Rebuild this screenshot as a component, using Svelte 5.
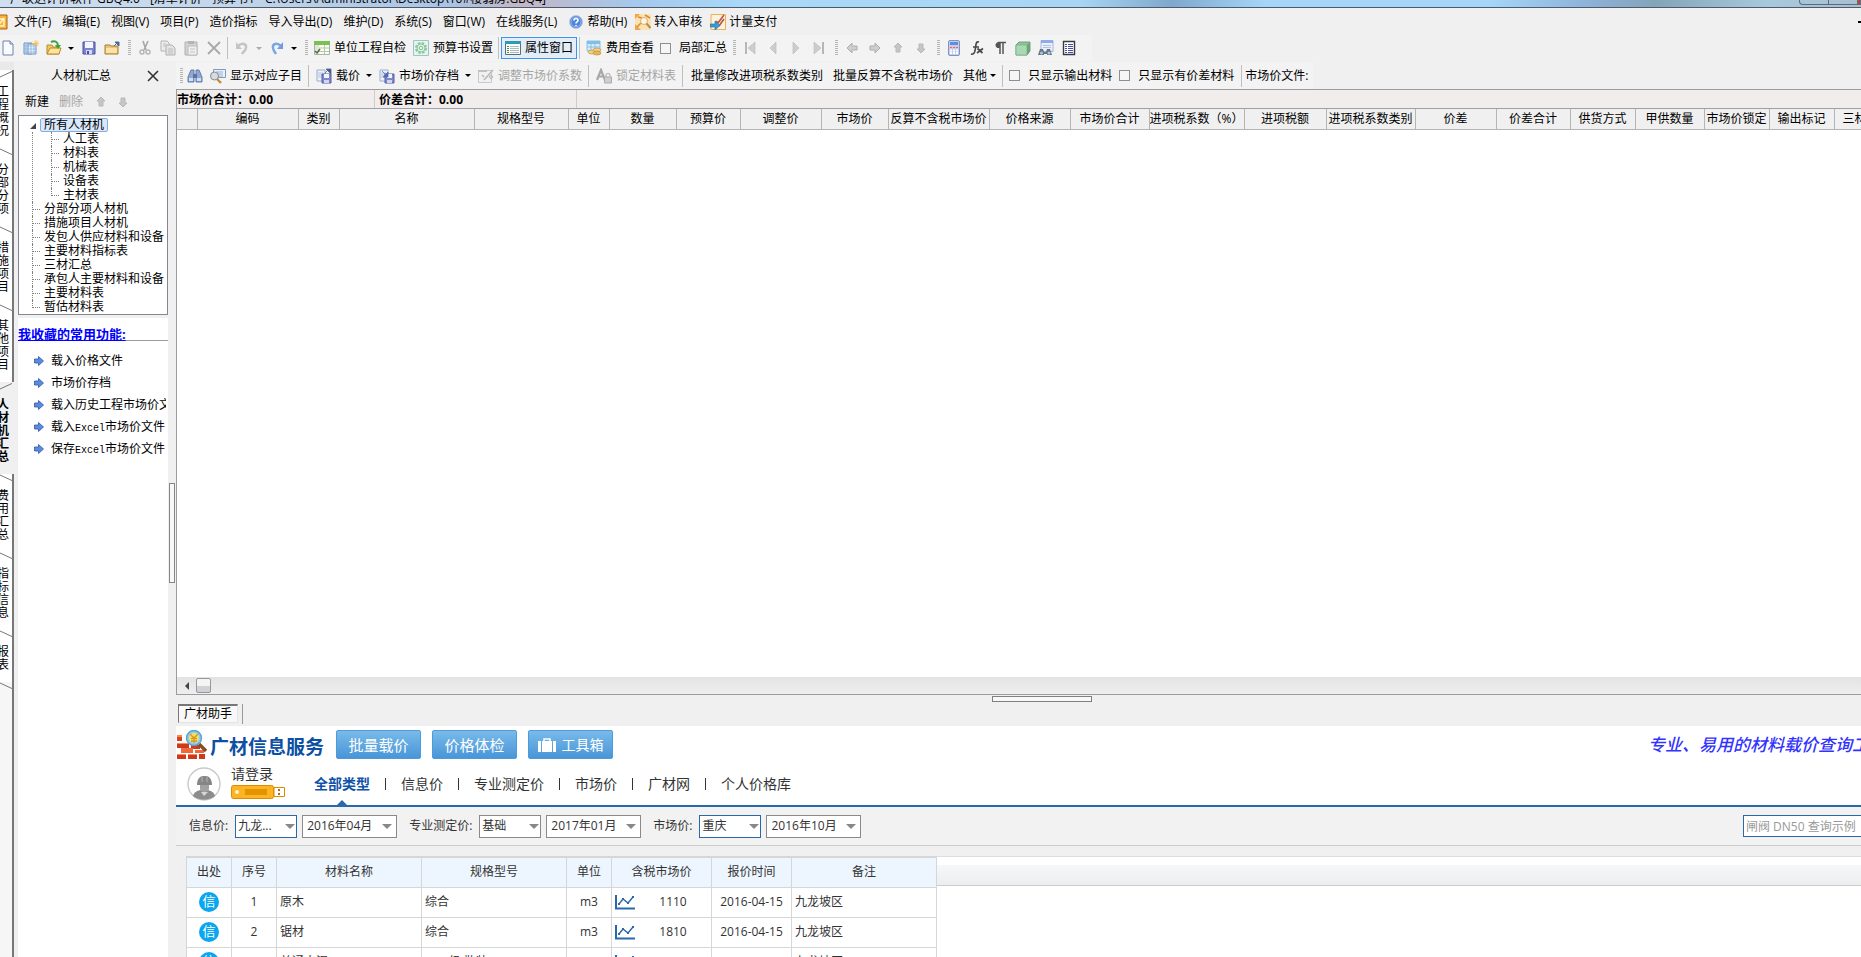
<script>
  const menus = [
    { t: '文件(F)' }, { t: '编辑(E)' }, { t: '视图(V)' }, { t: '项目(P)' }, { t: '造价指标' },
    { t: '导入导出(D)' }, { t: '维护(D)' }, { t: '系统(S)' }, { t: '窗口(W)' }, { t: '在线服务(L)' },
    { t: '帮助(H)', i: 'help' }, { t: '转入审核', i: 'audit' }, { t: '计量支付', i: 'pay' }
  ];

  const mainTools = [
    { i: 'new' }, { i: 'sheets' }, { i: 'open' }, { k: 'tri' }, { i: 'save' }, { i: 'folder' },
    { k: 'grip' }, { i: 'cut' }, { i: 'copy' }, { i: 'paste' }, { i: 'del' }, { k: 'sep' },
    { i: 'undo' }, { k: 'tri', off: true }, { i: 'redo' }, { k: 'tri' }, { k: 'grip' },
    { i: 'check', t: '单位工程自检' }, { i: 'gear', t: '预算书设置' }, { k: 'sep' },
    { i: 'props', t: '属性窗口', on: true }, { k: 'sep' }, { i: 'cost', t: '费用查看' },
    { k: 'box', t: '局部汇总' }, { k: 'grip' }, { i: 'first' }, { i: 'prev' }, { i: 'next' }, { i: 'last' },
    { k: 'grip' }, { i: 'aleft' }, { i: 'aright' }, { i: 'aup' }, { i: 'adown' }, { k: 'grip' },
    { i: 'calc' }, { i: 'fx' }, { i: 'para' }, { i: 'cube' }, { i: 'find' }, { i: 'list' }
  ];

  const subTools = [
    { k: 'grip' }, { i: 'bino' }, { i: 'lens', t: '显示对应子目' }, { k: 'sep' },
    { i: 'load', t: '载价' }, { k: 'tri' }, { i: 'store', t: '市场价存档' }, { k: 'tri' },
    { i: 'adjust', t: '调整市场价系数', off: true }, { k: 'sep' },
    { i: 'lock', t: '锁定材料表', off: true }, { k: 'sep' },
    { t: '批量修改进项税系数类别' }, { t: '批量反算不含税市场价' }, { t: '其他', tight: true }, { k: 'tri' }, { k: 'sep' },
    { k: 'box', t: '只显示输出材料' }, { k: 'box', t: '只显示有价差材料' }, { k: 'sep' }, { k: 'label', t: '市场价文件:' }
  ];

  const pages = ['工程概况', '分部分项', '措施项目', '其他项目', '人材机汇总', '费用汇总', '指标信息', '报表'];
  const active = '人材机汇总';

  const children = ['人工表', '材料表', '机械表', '设备表', '主材表'];
  const nodes = ['分部分项人材机', '措施项目人材机', '发包人供应材料和设备', '主要材料指标表', '三材汇总', '承包人主要材料和设备', '主要材料表', '暂估材料表'];

  const favourites = [['载入价格文件'], ['市场价存档'], ['载入历史工程市场价文件'], ['载入', 'Excel', '市场价文件'], ['保存', 'Excel', '市场价文件']];

  const cols = [
    ['', 20], ['编码', 101], ['类别', 41], ['名称', 135], ['规格型号', 94], ['单位', 41], ['数量', 67], ['预算价', 64],
    ['调整价', 81], ['市场价', 67], ['反算不含税市场价', 101], ['价格来源', 81], ['市场价合计', 79], ['进项税系数（%）', 95],
    ['进项税额', 82], ['进项税系数类别', 89], ['价差', 81], ['价差合计', 74], ['供货方式', 65], ['甲供数量', 69],
    ['市场价锁定', 65], ['输出标记', 65], ['三材类别', 65]
  ];

  const types = ['全部类型', '信息价', '专业测定价', '市场价', '广材网', '个人价格库'];
  const filters = [
    { id: 'info', label: '信息价:', area: '九龙...', month: '2016年04月', hot: true },
    { id: 'pro', label: '专业测定价:', area: '基础', month: '2017年01月', hot: false },
    { id: 'market', label: '市场价:', area: '重庆', month: '2016年10月', hot: true }
  ];
  const rows = [
    [1, '原木', '综合', 'm3', '1110', '2016-04-15', '九龙坡区'],
    [2, '锯材', '综合', 'm3', '1810', '2016-04-15', '九龙坡区'],
    [3, '普通水泥', '32.5级 散装', 't', '295', '2016-04-15', '九龙坡区']
  ];
</script>

{#snippet icon(name)}
  <svg class="ico" viewBox="0 0 16 16" width="16" height="16" aria-hidden="true">
    {#if name === 'help'}
      <circle cx="8" cy="8" r="6.5" fill="#4f86d9" stroke="#b9c9e4" /><circle cx="8" cy="8" r="5" fill="none" stroke="#8fb4ee" />
      <path d="M6 6.4c0-2.6 4-2.6 4 0 0 1.5-2 1.4-2 3M8 11v1.3" fill="none" stroke="#fff" stroke-width="1.6" />
    {:else if name === 'audit'}
      <path d="M0 0h16v16H0z" fill="#fbe3b0" /><path d="M0 10L6 16H0zM0 0h5L0 5z" fill="#f0a548" /><path d="M3 3l4 1M10 1l5 3M2 13l4-4" stroke="#d9883a" stroke-width="1.500" />
      <circle cx="9" cy="7" r="3.5" fill="#fff6e2" stroke="#dcae70" /><path d="M11.500 9.500l4 4.500" stroke="#b98a55" stroke-width="2" />
    {:else if name === 'pay'}
      <path d="M1 .5h14.500v15H1z" fill="#fdf3dd" stroke="#eab253" /><path d="M6 7l2 2 6-8M9 12l5-7" stroke="#b9584a" stroke-width="1.700" fill="none" />
      <path d="M0 10h5V7l5 4.500L5 16v-3H0z" fill="#3a9ad6" stroke="#1f6fa8" stroke-width=".6" />
    {:else if name === 'new'}
      <path d="M3 1h7l3 3v11H3z" fill="#f7fbff" stroke="#6d83a8" /><path d="M10 1v3h3" fill="#cfdcf0" stroke="#6d83a8" />
    {:else if name === 'sheets'}
      <path d="M1 3h8v11H1z" fill="#cfe3f7" stroke="#6a93c4" /><path d="M5 4h8v10H5z" fill="#e9f3fc" stroke="#6a93c4" />
      <path d="M1 6h12M1 9h12M1 12h12M8 4v10M11 4v10M3 3v11" stroke="#8fb2da" stroke-width=".8" />
      <path d="M13 0v7M9.500 3.500h7M10.500 1l5 5M15.500 1l-5 5" stroke="#f7c34b" stroke-width=".9" />
    {:else if name === 'open'}
      <path d="M1 5h5l1 2h6v7H1z" fill="#f3c95f" stroke="#b98a2a" /><path d="M1 14l3-6h11l-2 6z" fill="#fde49b" stroke="#b98a2a" />
      <path d="M5 2c4-2 7 0 7 4" fill="none" stroke="#3aa43a" stroke-width="2" /><path d="M9 5h6l-3 4z" fill="#3aa43a" />
    {:else if name === 'save'}
      <path d="M2 2h12v12H2z" fill="#7d83cf" stroke="#4b519c" /><path d="M4 2h8v6H4z" fill="#f4f6ff" /><path d="M5 10h6v4H5z" fill="#d9dcf5" /><path d="M6 11h2v3H6z" fill="#4b519c" />
    {:else if name === 'folder'}
      <path d="M1 5h5l1 1h7v8H1z" fill="#e9c47c" stroke="#a67c33" /><path d="M2 8h11v5H2z" fill="#fbe2a5" /><path d="M10 6l3-3M11 2h4v4z" fill="#4b6a9c" stroke="#4b6a9c" />
    {:else if name === 'cut'}
      <path d="M6 1l3 9M11 1L7 10" stroke="#a8a8a8" stroke-width="1.6" /><circle cx="5" cy="12" r="2" fill="none" stroke="#b4b4b4" stroke-width="1.4" /><circle cx="11" cy="12" r="2" fill="none" stroke="#b4b4b4" stroke-width="1.4" />
    {:else if name === 'copy'}
      <path d="M1 1h6l2 2v8H1z" fill="#ececec" stroke="#b4b4b4" /><path d="M6 5h6l3 3v7H6z" fill="#e4e4e4" stroke="#b0b0b0" /><path d="M8 9h5M8 11h5M8 13h5M3 4h3M3 6h2" stroke="#bdbdbd" />
    {:else if name === 'paste'}
      <path d="M2 2h12v13H2z" fill="#d2d2d2" stroke="#b0b0b0" /><path d="M5 1h6v3H5z" fill="#b4b4b4" /><path d="M5 6h9v9H5z" fill="#efefef" stroke="#bcbcbc" /><path d="M7 9h5M7 12h5" stroke="#c4c4c4" />
    {:else if name === 'del'}
      <path d="M2 2l12 12M14 2L2 14" stroke="#a9a9a9" stroke-width="1.8" />
    {:else if name === 'undo'}
      <path d="M4 6c4-4 9-2 8 2-.5 3-3 4-4 6" fill="none" stroke="#c4c4c4" stroke-width="2.400" /><path d="M2 2v7h6z" fill="#c4c4c4" />
    {:else if name === 'redo'}
      <path d="M12 6C8 2 3 4 4 8c.5 3 2 4 3 6" fill="none" stroke="#7ba6e6" stroke-width="2.400" /><path d="M14 2v7H8z" fill="#6f9be0" />
    {:else if name === 'check'}
      <path d="M.5 1.500h15v13H.5z" fill="#fbfdf9" stroke="#a8b3a0" /><path d="M0 1h16v4H0z" fill="#7cc04f" /><path d="M5 8h10M5 11.500h10M10.500 5v9" stroke="#b4c8a8" /><path d="M1 5h4v9H1z" fill="#dfe8d8" /><path d="M1 11l2 2 3-4" fill="none" stroke="#55654a" stroke-width="1.400" />
    {:else if name === 'gear'}
      <path d="M.5 .5h15v15H.5z" fill="#e6f4ee" stroke="#9cc4cf" /><circle cx="8" cy="8" r="5" fill="none" stroke="#8cc79a" stroke-width="2" stroke-dasharray="2.500 1.430" /><circle cx="8" cy="8" r="4" fill="none" stroke="#8cc79a" /><circle cx="8" cy="8" r="1.800" fill="none" stroke="#7dbd8d" />
    {:else if name === 'props'}
      <path d="M.5 1.500h15v13H.5z" fill="#f8fbfb" stroke="#5b6f74" /><path d="M0 1h16v3H0z" fill="#2d9ab4" /><path d="M2 6.500h2M2 8.500h2M2 10.500h2M2 12.500h2" stroke="#3d9a4e" /><path d="M5 6.500h9M5 8.500h9M5 10.500h9M5 12.500h9" stroke="#b0bcbc" />
    {:else if name === 'cost'}
      <path d="M1 1h13v10H1z" fill="#d6ecfa" stroke="#8dbfe2" /><path d="M1 1h13v3H1z" fill="#7fc0ea" /><path d="M1 7h13M5 4v7M9 4v7" stroke="#8dbfe2" /><ellipse cx="6" cy="12" rx="4" ry="2" fill="#f0cf8e" stroke="#b98a3a" stroke-width=".6" /><ellipse cx="11" cy="10" rx="4" ry="2" fill="#f0cf8e" stroke="#b98a3a" stroke-width=".6" /><ellipse cx="11" cy="13" rx="4" ry="2" fill="#e8b858" stroke="#b98a3a" stroke-width=".6" />
    {:else if name === 'first'}
      <path d="M4 2v12" stroke="#b6b6b6" stroke-width="2" /><path d="M13 2v12L6 8z" fill="#cdcdcd" stroke="#b9b9b9" stroke-width=".6" />
    {:else if name === 'prev'}
      <path d="M11 2v12L5 8z" fill="#cdcdcd" stroke="#b9b9b9" stroke-width=".6" />
    {:else if name === 'next'}
      <path d="M5 2v12l6-6z" fill="#cdcdcd" stroke="#b9b9b9" stroke-width=".6" />
    {:else if name === 'last'}
      <path d="M12 2v12" stroke="#b6b6b6" stroke-width="2" /><path d="M3 2v12l7-6z" fill="#cdcdcd" stroke="#b9b9b9" stroke-width=".6" />
    {:else if name === 'aleft'}
      <path d="M3 8l5-5v3h5v4H8v3z" fill="#cfcfcf" stroke="#adadad" />
    {:else if name === 'aright'}
      <path d="M13 8L8 3v3H3v4h5v3z" fill="#cfcfcf" stroke="#adadad" />
    {:else if name === 'aup'}
      <path d="M8 3l4 4H10v5H6V7H4z" fill="#c6c6c6" stroke="#b8b8b8" />
    {:else if name === 'adown'}
      <path d="M8 13l4-4H10V4H6v5H4z" fill="#c6c6c6" stroke="#b8b8b8" />
    {:else if name === 'calc'}
      <rect x="2.500" y=".5" width="11" height="15" rx="1.500" fill="#c3cfec" stroke="#7f92c0" /><path d="M4 2h8v3H4z" fill="#5c8fe0" /><path d="M4 7.500h8M4 10.500h8M4 13h8" stroke="#fff" stroke-width="2" stroke-dasharray="2 1" /><path d="M4 7.500h8" stroke="#d66" stroke-width="1.500" stroke-dasharray="2 1" />
    {:else if name === 'fx'}
      <path d="M10 2C7 1 7 4 6.500 8S5 15 2 14M4 7h6M8.500 8.500l5 4.500M14 8.500L8 13" fill="none" stroke="#4a4a4a" stroke-width="1.700" />
    {:else if name === 'para'}
      <path d="M8 2v12M11 2v12M6 2.500h8" stroke="#555" stroke-width="1.500" fill="none" /><path d="M8 2C2 1 2 9 8 8z" fill="#555" />
    {:else if name === 'cube'}
      <path d="M1 5l3-3h11v9l-3 4H1z" fill="#8fc79b" stroke="#5a8f68" stroke-width=".8" /><path d="M1 5h11v10H1z" fill="#a9d9b2" stroke="#6fa67c" stroke-width=".6" /><path d="M12 5l3-3v9l-3 4z" fill="#68a678" />
    {:else if name === 'find'}
      <path d="M3 .5h12v11H3z" fill="#eaf0fb" stroke="#a3b4dc" /><path d="M3 0h12v3H3z" fill="#8fabea" /><path d="M5 5.500h8M5 7.500h8" stroke="#b4c2e0" /><path d="M0 15l2-6h3l1 3h2l1-3h3l2 6H9v-1H6v1z" fill="#6b7482" /><circle cx="3.500" cy="13" r="1.500" fill="#a8c9ee" /><circle cx="11" cy="13" r="1.500" fill="#a8c9ee" />
    {:else if name === 'list'}
      <path d="M2.500 1.500h11v13h-11z" fill="#fff" stroke="#3a3a3a" stroke-width="1.400" /><path d="M4 4.500h8M4 6.500h8M4 8.500h8M4 10.500h8M4 12.500h8" stroke="#4a4aa8" stroke-dasharray="2 1 6" />
    {:else if name === 'bino'}
      <path d="M1 14V9l3-7h3v12zM15 14V9l-3-7H9v12z" fill="#8fa9d4" stroke="#5a74a4" stroke-width=".9" /><path d="M6 6h4v4H6z" fill="#5a74a4" /><path d="M2 10h4v3H2zM10 10h4v3h-4z" fill="#d3e0f4" />
    {:else if name === 'lens'}
      <path d="M3.500 1.500h12v8h-12z" fill="#eaf1fa" stroke="#7f99bf" /><path d="M6 4h7M6 6h7M9 8h4" stroke="#9bb1cf" /><circle cx="4.500" cy="8" r="4" fill="#d4dde6" stroke="#85898f" /><path d="M7 11l4 4" stroke="#c58a3c" stroke-width="2.400" />
    {:else if name === 'load' || name === 'store'}
      <path d="M1 2h8v11H1z" fill="#eef3fb" stroke="#9aaccc" /><path d="M2 5h5M2 7h5M2 9h4" stroke="#b4c1da" /><path d="M6 6h9v9H6z" fill="#8089c8" stroke="#575fa4" /><path d="M8 6h5v4H8z" fill="#f1f3ff" /><path d="M8 12h5v3H8z" fill="#cfd5f2" />
      {#if name === 'load'}<path d="M9 5l3-3M10 1h5v5z" fill="#4b5f8c" stroke="#4b5f8c" stroke-width=".8" />{:else}<path d="M3 3l5 5M9 4v5H4z" fill="#4f6fb4" stroke="#4f6fb4" stroke-width=".8" />{/if}
    {:else if name === 'adjust'}
      <path d="M.5 2.500h13v12H.5z" fill="#f1f1f1" stroke="#c8c8c8" /><path d="M0 2h9v2H0z" fill="#c0c0c0" /><path d="M6 12l9-10M4 7l2 2" stroke="#b8b8b8" stroke-width="1.500" /><circle cx="13" cy="9" r="1.500" fill="none" stroke="#b4b4b4" />
    {:else if name === 'lock'}
      <path d="M1 12L5 2l4 10M2.500 8.500h5" fill="none" stroke="#a8a8a8" stroke-width="2.200" /><path d="M8.500 9h7v6h-7z" fill="#cfcfcf" stroke="#ababab" /><path d="M10 9V7c0-2 4-2 4 0v2" fill="none" stroke="#b4b4b4" stroke-width="1.200" />
    {/if}
  </svg>
{/snippet}

{#snippet tool(b, id)}
  {#if b.k === 'tri'}
    <button class="tri" class:off={b.off} aria-label="展开"></button>
  {:else if b.k === 'sep'}
    <span class="sep"></span>
  {:else if b.k === 'grip'}
    <span class="grip"></span>
  {:else if b.k === 'box'}
    <label class="box" for={id}><input {id} type="checkbox" />{b.t}</label>
  {:else if b.k === 'label'}
    <span class="plain">{b.t}</span>
  {:else}
    <button class="tool" class:text={!b.i} class:tight={b.tight} class:on={b.on} disabled={b.off} aria-label={b.t ?? b.i}>
      {#if b.i}{@render icon(b.i)}{/if}{#if b.t}<span>{b.t}</span>{/if}
    </button>
  {/if}
{/snippet}

<div class="app">
  <header class="title">
    <span class="caption">广联达计价软件 GBQ4.0 - [清单计价 - 预算书1 - C:\Users\Administrator\Desktop\10#楼弱房.GBQ4]</span>
    <span class="winbtns"><i></i><i></i><i class="close"></i></span>
  </header>

  <nav class="menu">
    <svg class="brand" viewBox="0 0 8 16" width="8" height="16" aria-hidden="true"><path d="M-8 1H7v14H-8z" fill="#f9b233" stroke="#a8641a" /><path d="M-2 12l6-8M-1 5h5v7h-5" fill="none" stroke="#fff3c9" stroke-width="1.500" /></svg>
    {#each menus as m}
      <button class="mi" class:pic={m.i}>{#if m.i}{@render icon(m.i)}{/if}<span>{m.t}</span></button>
    {/each}
    <span class="mdi"></span>
  </nav>

  <div class="bar"><div class="tools first">{#each mainTools as b, n}{@render tool(b, 'm' + n)}{/each}</div></div>

  <div class="body">
    <nav class="pages">
      {#each pages as p, n}
        <button class:cur={p === active}>
          {#if p === active || n === 0}
            <svg class="slant" viewBox="0 0 14 8" width="14" height="8"><path d="M0 7L13 1" /></svg>
          {:else}
            <svg class="slant" viewBox="0 0 14 8" width="14" height="8"><path d="M0 1L13 7" /></svg>
          {/if}
          <span>{p}</span>
        </button>
      {/each}
      <div class="rest"><svg class="slant" viewBox="0 0 14 8" width="14" height="8"><path d="M0 1L13 7" /></svg></div>
    </nav>

    <aside class="side">
      <div class="head">
        <span>人材机汇总</span>
        <button class="x" aria-label="关闭"><svg viewBox="0 0 12 12" width="12" height="12"><path d="M1 1l10 10M11 1L1 11" stroke="#333" stroke-width="1.600" /></svg></button>
      </div>
      <div class="edit"><button>新建</button><button disabled>删除</button><button class="ib" aria-label="上移">{@render icon('aup')}</button><button class="ib" aria-label="下移">{@render icon('adown')}</button></div>
      <ul class="tree">
        <li class="root"><svg viewBox="0 0 6 6" width="6" height="6"><path d="M6 0v6H0z" fill="#444" /></svg><button class="node sel">所有人材机</button>
          <ul>{#each children as c}<li><button class="node">{c}</button></li>{/each}</ul>
        </li>
        {#each nodes as c}<li><button class="node">{c}</button></li>{/each}
      </ul>
      <section class="fav">
        <h2><a href="#fav">我收藏的常用功能:</a></h2>
        <ul>
          {#each favourites as f}
            <li>
              <svg viewBox="0 0 10 10" width="10" height="10"><path d="M.5 3h4V.5L9.500 5 4.500 9.500V7h-4z" fill="#5b8ae0" stroke="#2f58a8" stroke-width=".8" /></svg>
              <a href="#f">{f[0]}{#if f[1]}<code>{f[1]}</code>{f[2]}{/if}</a>
            </li>
          {/each}
        </ul>
      </section>
    </aside>

    <div class="split"><i></i></div>

    <main>
      <div class="tools sub">{#each subTools as b, n}{@render tool(b, 's' + n)}{/each}</div>
      <section class="grid">
        <div class="sums"><b>市场价合计：0.00</b><b>价差合计：0.00</b></div>
        <div class="cols">
          <table>
            <colgroup>{#each cols as c}<col style="width: {c[1]}px" />{/each}</colgroup>
            <thead><tr>{#each cols as c}<th>{c[0]}</th>{/each}</tr></thead>
          </table>
        </div>
        <div class="empty"></div>
        <div class="scroll"><button aria-label="向左"><svg viewBox="0 0 4 8" width="4" height="8"><path d="M4 0v8L0 4z" fill="#444" /></svg></button><i></i></div>
      </section>

      <div class="hsplit"><i></i></div>

      <section class="helper">
        <div class="tabs"><button>广材助手</button></div>
        <div class="top">
          <div class="logo">
            <svg viewBox="0 0 30 30" width="30" height="30" aria-hidden="true">
              <path d="M0 5h5v6H0z" fill="#d9401f" /><path d="M0 13h12v5H0zM14 15h9v4h-9zM0 24h9v5H0zM11 24h9v5h-9zM22 24h6v5h-6z" fill="#cf3a1c" /><path d="M4 18h12v5H4zM18 20h9v3h-9z" fill="#f0693a" /><path d="M0 5h5v2H0zM0 13h12v1H0zM0 24h9v1H0zM11 24h9v1h-9z" fill="#f58a5c" />
              <path d="M22 14l7 7" stroke="#8a4d22" stroke-width="3.500" /><circle cx="17" cy="8" r="7.500" fill="#8fcbf0" stroke="#5a9fd4" stroke-width="1.400" />
              <circle cx="17" cy="8" r="5" fill="#f7e060" /><path d="M13 4l4 4 4-4M14 8.500h6M14 11h6M17 8v5" stroke="#d29a1c" stroke-width="1.300" fill="none" />
            </svg>
            <span>广材信息服务</span>
          </div>
          <button class="blue">批量载价</button>
          <button class="blue">价格体检</button>
          <button class="blue"><svg viewBox="0 0 18 14" width="18" height="14"><path d="M0 3h3v11H0zM4 3h10v11H4zM15 3h3v11h-3z" fill="#fff" /><path d="M6 3V1h6v2" fill="none" stroke="#fff" stroke-width="1.500" /></svg><span>工具箱</span></button>
          <em>专业、易用的材料载价查询工具</em>
        </div>
        <div class="user">
          <svg class="avatar" viewBox="0 0 34 34" width="34" height="34" aria-hidden="true">
            <circle cx="17" cy="17" r="16" fill="#fff" stroke="#c9c9c9" stroke-width="1.400" />
            <path d="M6 29c1-4 4-5 7-6h8c3 1 6 2 7 6-6 5-16 5-22 0z" fill="#8c8c8c" /><path d="M13 16h9v6c-1 4-8 4-9 0z" fill="#a2a2a2" /><path d="M10 18c0-5 2-8 5-9h5c3 1 5 4 5 9z" fill="#868686" /><path d="M15 9v6M20 9v6" stroke="#b4b4b4" /><path d="M14 25l3 4 4-4" fill="#d6d6d6" />
          </svg>
          <div class="login"><a href="#login">请登录</a>
            <svg viewBox="0 0 54 14" width="54" height="14" aria-hidden="true"><rect x=".5" y=".5" width="42" height="13" rx="2" fill="#fdb424" stroke="#e08a00" /><path d="M43 2.500h10.500v9H43z" fill="#fff" stroke="#e08a00" /><path d="M14 4h22v6H14z" fill="#e39400" /><circle cx="6" cy="7" r="2" fill="#fff2cf" /><path d="M47 4h2v2h-2zM47 8h2v2h-2z" fill="#b86a00" /></svg>
          </div>
          <nav class="types">{#each types as t, n}{#if n}<i></i>{/if}<button class:cur={n === 0}>{t}</button>{/each}</nav>
        </div>
        <form class="filter">
          {#each filters as f}
            <label for={f.id}>{f.label}</label>
            <span class="dd area" class:hot={f.hot}><select id={f.id}><option>{f.area}</option></select></span>
            <span class="dd month"><select aria-label="{f.label}月份"><option>{f.month}</option></select></span>
          {/each}
          <input class="search" type="text" aria-label="查询" placeholder="闸阀 DN50 查询示例" />
        </form>
        <div class="result">
          <table>
            <thead><tr><th class="s">出处</th><th class="s">序号</th><th class="l">材料名称</th><th class="l">规格型号</th><th class="s">单位</th><th class="p">含税市场价</th><th class="d">报价时间</th><th class="l">备注</th></tr></thead>
            <tbody>
              {#each rows as r}
                <tr>
                  <td><span class="xin">信</span></td><td>{r[0]}</td><td class="left">{r[1]}</td><td class="left">{r[2]}</td><td>{r[3]}</td>
                  <td><div class="price"><svg viewBox="0 0 20 15" width="20" height="15"><path d="M1 0v13.500h19" fill="none" stroke="#2a67ab" stroke-width="2" /><path d="M4 9l4-5 5 4 5-6" fill="none" stroke="#2a67ab" stroke-width="1.400" /><path d="M3 8h2v2H3zM7 3h2v2H7zM12 7h2v2h-2zM17 1h2v2h-2z" fill="#2a67ab" /></svg><span>{r[4]}</span></div></td>
                  <td>{r[5]}</td><td class="left">{r[6]}</td>
                </tr>
              {/each}
            </tbody>
          </table>
          <div class="blank"><div></div></div>
        </div>
      </section>
    </main>
  </div>
</div>

<style>
  :global(body) { margin: 0; overflow: hidden; }
  .app { height: 100vh; display: flex; flex-direction: column; background: #f0f0f0; color: #000; font: 12px/14px "Open Sans", "Noto Sans CJK SC", sans-serif; overflow: hidden; white-space: nowrap; }
  button { font: inherit; color: inherit; background: none; border: 0; padding: 0; margin: 0; }
  ul { list-style: none; margin: 0; padding: 0; }
  a { color: inherit; text-decoration: none; }
  svg { display: block; flex: none; overflow: hidden; }
  button:disabled { color: #a5a5a5; }

  .title { height: 7px; flex: none; display: flex; align-items: flex-end; justify-content: space-between; overflow: hidden; border-bottom: 1px solid #4c5a6b; box-sizing: content-box;
    background: linear-gradient(90deg, #cfdff0 0, #c3d6ea 12%, #a9c4e4 24%, #c5b6c4 28%, #a5c8ec 34%, #a9d8f8 40%, #a9d6f4 58%, #7fa8cc 63%, #a5d6f8 68%, #a5d6f8 80%, #8fb4dc 85%, #84a4b8 89%, #a8c8dc 95%, #a9bfd2 100%); }
  .caption { padding-left: 10px; line-height: 16px; }
  .winbtns { display: flex; height: 4px; align-self: flex-start; border: 1px solid #5c6b7c; border-top: 0; border-radius: 0 0 0 4px; }
  .winbtns i { width: 28px; border-right: 1px solid #5c6b7c; }
  .winbtns .close { width: 2px; background: #b8483c; border: 0; }

  .menu { height: 27px; flex: none; display: flex; align-items: center; }
  .brand { margin-right: 6px; }
  .mi { display: flex; align-items: center; gap: 3px; margin-right: 11px; }
  .mi.pic { margin-right: 8px; }
  .mdi { width: 3px; height: 2px; background: #000; margin-left: auto; }

  .bar { height: 27px; flex: none; display: flex; }
  .tools { display: flex; align-items: center; background: #f3f3f3; height: 26px; align-self: flex-start; overflow: hidden; }
  .tools.first { padding: 0 12px 0 0; }
  .first > :global(button:first-child) { margin-left: -4px; }
  .tool { display: flex; align-items: center; height: 22px; padding: 0 3px 0 4px; box-sizing: border-box; gap: 4px; flex: none; }
  .tool.text { padding: 0 5px; }
  .tool.tight { padding-right: 0; }
  .tool.on { border: 1px solid #3d95f2; background: #e3edf8; padding: 0 3px; }
  .tri { width: 12px; height: 22px; display: grid; place-items: center; flex: none; }
  .tri::after { content: ""; border: 3px solid transparent; border-top-color: #000; border-bottom: 0; }
  .tri.off::after { border-top-color: #aaa; }
  .sep { width: 1px; height: 22px; background: #bfbfbf; margin: 0 2px; flex: none; }
  .sub .sep { margin: 0 3px; }
  .grip { width: 3px; height: 16px; margin: 0 2px 0 5px; flex: none; background: repeating-linear-gradient(#b5b5b5 0 1px, transparent 1px 2px); }
  .sub .grip { margin: 0 0 0 4px; }
  .box { display: flex; align-items: center; gap: 8px; padding: 0 4px 0 3px; flex: none; }
  .first .box { padding-right: 1px; }
  .box input { appearance: none; width: 11px; height: 11px; margin: 0; border: 1px solid #8f8f8f; background: #f6f6f6; box-sizing: border-box; }
  .plain { padding-right: 4px; }

  .body { flex: 1; min-height: 0; display: flex; }
  .pages { width: 14px; flex: none; display: flex; flex-direction: column; padding-top: 8px; overflow: hidden; background: #e9e9e9; }
  .pages button { position: relative; height: 78px; flex: none; width: 14px; border-right: 2px solid #777; background: #fff; text-align: left; overflow: hidden; padding: 4px 0 0; }
  .pages button span { display: block; width: 12px; margin-left: -3px; line-height: 13px; white-space: normal; word-break: break-all; }
  .pages button.cur { height: 92px; background: #f0f0f0; border-color: #f0f0f0; font-weight: bold; }
  .pages button:last-of-type { height: 52px; }
  .rest { flex: 1; position: relative; border-right: 2px solid #777; background: #f6f6f6; }
  .slant { position: absolute; left: 0; top: 0; }
  .slant path { stroke: #777; fill: none; }

  .side { width: 150px; margin-left: 4px; flex: none; display: flex; flex-direction: column; overflow: hidden; }
  .head { height: 27px; display: flex; align-items: center; justify-content: space-between; padding: 0 9px 0 33px; }
  .edit { height: 26px; display: flex; align-items: center; padding-left: 7px; gap: 10px; }
  .edit .ib { width: 12px; display: grid; place-items: center; }
  .tree { border: 1px solid #828790; background: #fff; padding: 2px 0 1px 13px; height: 195px; box-sizing: content-box; overflow: hidden; }
  .tree li { padding-left: 12px; position: relative; min-height: 14px; }
  .tree li::before { content: ""; position: absolute; left: 0; top: 0; bottom: 0; border-left: 1px dotted #808080; }
  .tree li::after { content: ""; position: absolute; left: 0; top: 7px; width: 8px; border-top: 1px dotted #808080; }
  .tree li:last-child::before { bottom: auto; height: 8px; }
  .tree .root::before { top: 14px; }
  .tree .root::after { display: none; }
  .root > svg { position: absolute; left: -2px; top: 5px; }
  .root ul { padding-left: 7px; }
  .tree .node { display: block; line-height: 14px; height: 14px; }
  .tree .node.sel { background: #d9e8fb; border: 1px solid #84acdd; border-radius: 2px; margin-left: -4px; padding: 0 3px; line-height: 12px; }
  .fav { flex: 1; background: #fff; margin-top: 3px; }
  .fav h2 { font-size: 13px; margin: 0; height: 22px; line-height: 32px; border-bottom: 1px solid #9a9a9a; color: #00f; }
  .fav h2 a { text-decoration: underline; }
  .fav ul { padding: 9px 2px 0 16px; }
  .fav li { height: 22px; display: flex; align-items: center; gap: 7px; overflow: hidden; }
  code { font: 10px "Liberation Mono", monospace; }

  .split { width: 8px; flex: none; display: grid; place-items: center; }
  .split i { width: 4px; height: 98px; border: 1px solid #868686; background: #f8f8f8; margin-bottom: -46px; }
  main { flex: 1; min-width: 0; display: flex; flex-direction: column; }
  .sub { height: 27px; padding-right: 1px; }
  .grid { flex: 1; min-height: 0; display: flex; flex-direction: column; border: 1px solid #9b9ba0; border-right: 0; background: #fff; }
  .sums { height: 18px; flex: none; display: flex; background: #f1edec; border-bottom: 1px solid #a0a0a8; }
  .sums b { width: 197px; border-right: 1px solid #d0cccc; line-height: 20px; }
  .sums b + b { padding-left: 4px; }
  .cols { flex: none; overflow: hidden; }
  .cols table { border-collapse: collapse; table-layout: fixed; width: 1722px; }
  .cols th { box-sizing: border-box; height: 20px; padding: 0; font-weight: normal; background: #f0f0f0; border: 1px solid #b5b5b5; border-top: 0; border-left: 0; overflow: hidden; }
  .empty { flex: 1; }
  .scroll { height: 17px; flex: none; display: flex; align-items: center; background: linear-gradient(#e3e3e3, #efefef); }
  .scroll button { width: 19px; height: 17px; display: grid; place-items: center; }
  .scroll i { width: 13px; height: 13px; border: 1px solid #979797; border-radius: 2px; background: linear-gradient(#f5f5f5 50%, #d2d2d6 50%); }
  .hsplit { height: 8px; flex: none; display: flex; justify-content: center; align-items: center; }
  .hsplit i { width: 98px; height: 4px; border: 1px solid #808080; background: #f8f8f8; margin-left: 47px; }

  .helper { height: 254px; flex: none; display: flex; flex-direction: column; overflow: hidden; color: #333; }
  .tabs { height: 23px; flex: none; display: flex; align-items: flex-start; padding-top: 1px; box-sizing: border-box; }
  .tabs button { height: 19px; margin-left: 2px; padding: 0 5px; color: #000; background: #f8f8f8; border: 1px solid #e4e4e4; border-top: 2px solid #777; border-left-color: #777; box-sizing: border-box; }
  .tabs::after { content: ""; width: 1px; height: 20px; margin-left: 4px; background: #999; }
  .top { height: 37px; flex: none; display: flex; align-items: center; gap: 11px; background: #fff; }
  .logo { display: flex; align-items: center; width: 149px; gap: 3px; color: #0c4fa3; font-size: 19px; font-weight: bold; line-height: 28px; }
  .logo svg { margin-left: 1px; }
  .logo span { padding-top: 5px; }
  .blue { width: 85px; height: 29px; display: flex; align-items: center; justify-content: center; gap: 6px; border: 1px solid #4f9ad8; border-radius: 2px; color: #fff; font-size: 15px; background: linear-gradient(#79bbea, #4895d8); }
  .blue span { font-size: 14px; }
  .top em { margin-left: auto; width: 213px; overflow: hidden; color: #33f; font-size: 17px; line-height: 24px; font-weight: 500; }
  .user { height: 42px; flex: none; display: flex; background: #fff; border-bottom: 2px solid #2a67ab; padding-left: 11px; }
  .avatar { margin-top: 4px; }
  .login { width: 83px; margin-left: 10px; font-size: 14px; line-height: 22px; }
  .types { display: flex; align-items: center; font-size: 14px; gap: 15px; }
  .types button { position: relative; height: 42px; }
  .types .cur { color: #0f52a8; font-weight: bold; }
  .types .cur::after { content: ""; position: absolute; left: 50%; bottom: 0; margin-left: -5px; border: 5px solid transparent; border-bottom-color: #2a67ab; border-top: 0; }
  .types i { width: 1px; height: 12px; background: #333; }
  .filter { height: 39px; flex: none; display: flex; align-items: center; padding: 0 0 0 13px; background: #f2f2f2; border-bottom: 1px solid #ccc; box-sizing: border-box; }
  .filter label { margin-right: 7px; }
  .dd { position: relative; height: 23px; margin-right: 5px; flex: none; }
  .dd::after { content: ""; position: absolute; right: 2px; top: 9px; border: 5px solid transparent; border-top-color: #888; border-bottom: 0; pointer-events: none; }
  .dd.month::after { right: 5px; }
  .dd select { appearance: none; width: 100%; height: 23px; border: 1px solid #8a8a8a; border-radius: 0; background: #fff; color: #333; font: inherit; padding: 0 0 0 2px; box-sizing: border-box; display: block; }
  .dd.area { width: 62px; }
  .dd.month { width: 95px; margin-right: 12px; }
  .dd.month select { padding-left: 4px; }
  .dd.hot select { border-color: #2a67ab; }
  .search { margin-left: auto; width: 118px; height: 22px; box-sizing: border-box; border: 1px solid #2a67ab; border-right: 0; padding: 0 2px; font: inherit; }
  .search::placeholder { color: #999; }
  .result { flex: none; display: flex; margin: 10px 0 0 10px; align-items: stretch; }
  .result table { border-collapse: collapse; table-layout: fixed; width: 751px; flex: none; background: #fff; }
  .result th, .result td { border: 1px solid #d4d6d8; padding: 0; height: 30px; text-align: center; font-weight: normal; box-sizing: border-box; }
  .result th { background: #edf6ff; border-top-width: 2px; }
  .result td.left { text-align: left; padding-left: 3px; }
  .s { width: 45px; } .l { width: 145px; } .p { width: 100px; } .d { width: 80px; }
  .xin { display: block; width: 20px; height: 20px; margin: 0 auto; border-radius: 50%; background: #0aa6f0; color: #fff; font-size: 13px; line-height: 19px; }
  .price { display: flex; align-items: center; padding-left: 3px; }
  .price span { flex: 1; }
  .blank { flex: 1; background: #fff; border-top: 1px solid #ddd; padding-top: 8px; }
  .blank div { height: 20px; background: linear-gradient(#f6f7f9, #ecedef); border-bottom: 1px solid #ccc; }
</style>
